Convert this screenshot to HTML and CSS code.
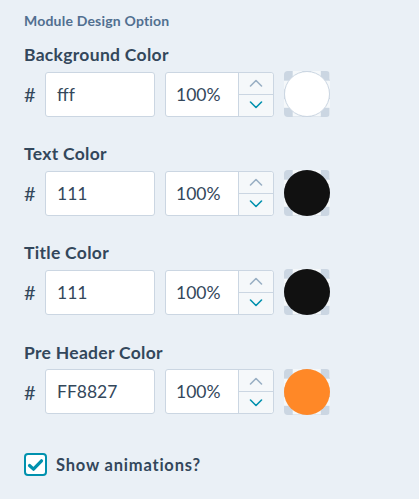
FILE: index.html
```html
<!DOCTYPE html>
<html>
<head>
<meta charset="utf-8">
<link rel="stylesheet" href="styles.css">
</head>
<body>
<div class="panel">
  <div class="section-title">Module Design Option</div>

  <div class="field">
    <div class="label">Background Color</div>
    <div class="row">
      <span class="hash">#</span>
      <div class="hex">fff</div>
      <div class="pct">
        <div class="pct-val">100%</div>
        <div class="spin">
          <div class="spin-btn"><svg width="14" height="8" viewBox="0 0 14 8"><path d="M1.5 7 L7 1.5 L12.5 7" fill="none" stroke="#99afc4" stroke-width="1.6" stroke-linecap="round" stroke-linejoin="round"/></svg></div>
          <div class="spin-btn"><svg width="14" height="8" viewBox="0 0 14 8"><path d="M1.5 1 L7 6.5 L12.5 1" fill="none" stroke="#0091ae" stroke-width="1.6" stroke-linecap="round" stroke-linejoin="round"/></svg></div>
        </div>
      </div>
      <div class="swatch"><div class="dot dot-white"></div></div>
    </div>
  </div>

  <div class="field">
    <div class="label">Text Color</div>
    <div class="row">
      <span class="hash">#</span>
      <div class="hex">111</div>
      <div class="pct">
        <div class="pct-val">100%</div>
        <div class="spin">
          <div class="spin-btn"><svg width="14" height="8" viewBox="0 0 14 8"><path d="M1.5 7 L7 1.5 L12.5 7" fill="none" stroke="#99afc4" stroke-width="1.6" stroke-linecap="round" stroke-linejoin="round"/></svg></div>
          <div class="spin-btn"><svg width="14" height="8" viewBox="0 0 14 8"><path d="M1.5 1 L7 6.5 L12.5 1" fill="none" stroke="#0091ae" stroke-width="1.6" stroke-linecap="round" stroke-linejoin="round"/></svg></div>
        </div>
      </div>
      <div class="swatch"><div class="dot dot-black"></div></div>
    </div>
  </div>

  <div class="field">
    <div class="label">Title Color</div>
    <div class="row">
      <span class="hash">#</span>
      <div class="hex">111</div>
      <div class="pct">
        <div class="pct-val">100%</div>
        <div class="spin">
          <div class="spin-btn"><svg width="14" height="8" viewBox="0 0 14 8"><path d="M1.5 7 L7 1.5 L12.5 7" fill="none" stroke="#99afc4" stroke-width="1.6" stroke-linecap="round" stroke-linejoin="round"/></svg></div>
          <div class="spin-btn"><svg width="14" height="8" viewBox="0 0 14 8"><path d="M1.5 1 L7 6.5 L12.5 1" fill="none" stroke="#0091ae" stroke-width="1.6" stroke-linecap="round" stroke-linejoin="round"/></svg></div>
        </div>
      </div>
      <div class="swatch"><div class="dot dot-black"></div></div>
    </div>
  </div>

  <div class="field">
    <div class="label">Pre Header Color</div>
    <div class="row">
      <span class="hash">#</span>
      <div class="hex">FF8827</div>
      <div class="pct">
        <div class="pct-val">100%</div>
        <div class="spin">
          <div class="spin-btn"><svg width="14" height="8" viewBox="0 0 14 8"><path d="M1.5 7 L7 1.5 L12.5 7" fill="none" stroke="#99afc4" stroke-width="1.6" stroke-linecap="round" stroke-linejoin="round"/></svg></div>
          <div class="spin-btn"><svg width="14" height="8" viewBox="0 0 14 8"><path d="M1.5 1 L7 6.5 L12.5 1" fill="none" stroke="#0091ae" stroke-width="1.6" stroke-linecap="round" stroke-linejoin="round"/></svg></div>
        </div>
      </div>
      <div class="swatch"><div class="dot dot-orange"></div></div>
    </div>
  </div>

  <label class="check">
    <span class="box"><svg width="17" height="14" viewBox="0 0 17 14"><path d="M2.5 7.5 L6.5 11.2 L14.5 2.8" fill="none" stroke="#0091ae" stroke-width="3.2" stroke-linecap="round" stroke-linejoin="round"/></svg></span>
    <span class="check-text">Show animations?</span>
  </label>
</div>
</body>
</html>
```

FILE: styles.css
```css
html, body {
  margin: 0;
  padding: 0;
  background: #eaf0f6;
}
body {
  font-family: "Lato", "Open Sans", sans-serif;
  color: #33475b;
}
.panel {
  padding: 11px 0 0 24px;
}
.section-title {
  font-size: 14px;
  font-weight: 700;
  color: #516f90;
  height: 20px;
  line-height: 20px;
  letter-spacing: 0.2px;
}
.field {
  display: flex;
  flex-direction: column;
}
.field + .field {
  margin-top: 13.2px;
}
.label {
  margin-top: 12px;
  font-size: 17.5px;
  font-weight: 700;
  height: 24px;
  line-height: 24px;
  letter-spacing: 0.3px;
}
.row {
  margin-top: 4px;
  display: flex;
  align-items: center;
  height: 46px;
}
.hash {
  width: 21px;
  font-size: 20px;
  color: #33475b;
}
.hex {
  box-sizing: border-box;
  width: 110px;
  height: 45px;
  background: #fff;
  border: 1px solid #cbd6e2;
  border-radius: 3px;
  padding-left: 11px;
  font-size: 17.5px;
  line-height: 43px;
}
.pct {
  box-sizing: border-box;
  margin-left: 10px;
  width: 109px;
  height: 45px;
  background: #fff;
  border: 1px solid #cbd6e2;
  border-radius: 3px;
  display: flex;
}
.pct-val {
  flex: 1;
  padding-left: 10px;
  font-size: 17.5px;
  line-height: 43px;
}
.spin {
  width: 34px;
  border-left: 1px solid #cbd6e2;
  background: #f5f8fa;
  display: flex;
  flex-direction: column;
  border-radius: 0 3px 3px 0;
}
.spin-btn {
  flex: 1;
  display: flex;
  align-items: center;
  justify-content: center;
}
.spin-btn + .spin-btn {
  border-top: 1px solid #cbd6e2;
}
.swatch {
  margin-left: 10px;
  width: 46px;
  height: 46px;
  border-radius: 4px;
  position: relative;
  background-color: #f5f8fa;
  background-image: conic-gradient(transparent 25%, #cbd6e2 25% 50%, transparent 50% 75%, #cbd6e2 75%);
  background-size: 18.4px 18.4px;
}
.dot {
  position: absolute;
  inset: 0;
  border-radius: 50%;
  box-sizing: border-box;
}
.dot-white {
  background: #fff;
  border: 1px solid #cbd6e2;
}
.dot-black {
  background: #111;
}
.dot-orange {
  background: #ff8827;
}
.check {
  margin-top: 38px;
  display: flex;
  align-items: center;
  height: 24px;
}
.box {
  box-sizing: border-box;
  width: 23px;
  height: 23px;
  border: 2px solid #0091ae;
  border-radius: 4px;
  background: #fff;
  display: flex;
  align-items: center;
  justify-content: center;
}
.check-text {
  margin-left: 9px;
  font-size: 16.5px;
  font-weight: 700;
  letter-spacing: 0.8px;
}
```
